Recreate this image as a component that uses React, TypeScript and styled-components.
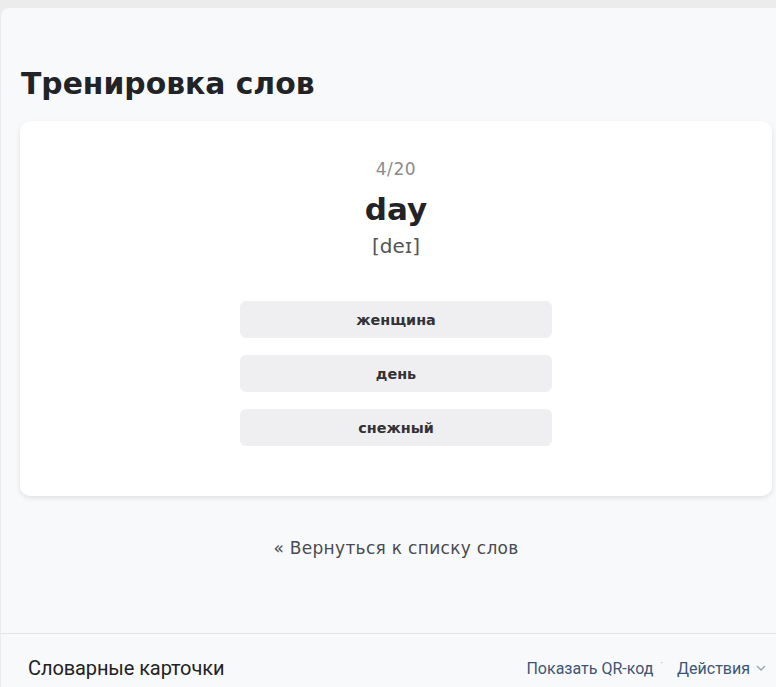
import React from "react";
import styled, { createGlobalStyle } from "styled-components";

const Global = createGlobalStyle`
  html, body { margin: 0; padding: 0; background: #ececec; }
  body { font-family: "DejaVu Sans", "Noto Sans", sans-serif; overflow: hidden; }
`;

const Shell = styled.div`
  margin-top: 8px;
  margin-left: 1px;
  background: #f8f9fb;
  border-top-left-radius: 8px;
  height: 679px;
  display: flex;
  flex-direction: column;
`;

const Main = styled.main`
  padding: 58px 4px 0 19px;
  display: flex;
  flex-direction: column;
  height: 567px;
`;

const Title = styled.h1`
  margin: 0;
  font-family: "DejaVu Sans", sans-serif;
  font-weight: 700;
  font-size: 29.8px;
  line-height: 36px;
  color: #222327;
  letter-spacing: 0px;
  padding-left: 1px;
`;

const Card = styled.section`
  margin-top: 19px;
  background: #ffffff;
  border-radius: 10px;
  box-shadow: 0 2px 5px rgba(0, 0, 0, 0.1);
  padding: 36px 0 50px;
  display: flex;
  flex-direction: column;
  align-items: center;
`;

const Counter = styled.div`
  font-size: 17px;
  line-height: 24px;
  color: #8a8a8e;
  font-weight: 400;
  letter-spacing: 0.6px;
`;

const Word = styled.div`
  font-size: 31px;
  line-height: 40px;
  font-weight: 700;
  color: #222327;
  margin-top: 8px;
`;

const Transcription = styled.div`
  font-size: 20px;
  line-height: 28px;
  color: #555;
  margin-top: 3px;
`;

const Options = styled.div`
  margin-top: 41px;
  display: flex;
  flex-direction: column;
  gap: 17px;
`;

const Option = styled.button`
  width: 312px;
  height: 37px;
  border: none;
  border-radius: 6px;
  background: #efeff1;
  font-family: "DejaVu Sans", sans-serif;
  font-weight: 700;
  font-size: 14.4px;
  color: #333336;
  cursor: pointer;
  padding: 0;
`;

const BackLink = styled.a`
  align-self: center;
  margin-top: 40px;
  font-size: 17px;
  line-height: 24px;
  color: #4a4a50;
  text-decoration: none;
  letter-spacing: 0.3px;
`;

const Footer = styled.footer`
  border-top: 1px solid #e3e4e8;
  display: flex;
  align-items: center;
  justify-content: space-between;
  padding: 22px 10px 0 27px;
  font-family: Roboto, "Liberation Sans", sans-serif;
`;

const FooterTitle = styled.div`
  font-size: 20px;
  color: #222;
  letter-spacing: -0.1px;
`;

const FooterLinks = styled.div`
  display: flex;
  align-items: center;
  gap: 7px;
`;

const FooterLink = styled.a`
  font-size: 16px;
  color: #3d5673;
  display: flex;
  align-items: center;
  gap: 6px;
`;

const Dot = styled.span`
  font-size: 10px;
  color: #aab;
  margin-top: -10px;
  margin-right: 7px;
`;

export default function App() {
  return (
    <>
      <Global />
      <Shell>
        <Main>
          <Title>Тренировка слов</Title>
          <Card>
            <Counter>4/20</Counter>
            <Word>day</Word>
            <Transcription>[deɪ]</Transcription>
            <Options>
              <Option>женщина</Option>
              <Option>день</Option>
              <Option>снежный</Option>
            </Options>
          </Card>
          <BackLink href="#">« Вернуться к списку слов</BackLink>
        </Main>
        <Footer>
          <FooterTitle>Словарные карточки</FooterTitle>
          <FooterLinks>
            <FooterLink>Показать QR-код</FooterLink>
            <Dot>·</Dot>
            <FooterLink>
              Действия
              <svg width="10" height="6" viewBox="0 0 10 6">
                <path d="M1 1l4 4 4-4" fill="none" stroke="#9aa3ae" strokeWidth="1.3" />
              </svg>
            </FooterLink>
          </FooterLinks>
        </Footer>
      </Shell>
    </>
  );
}
